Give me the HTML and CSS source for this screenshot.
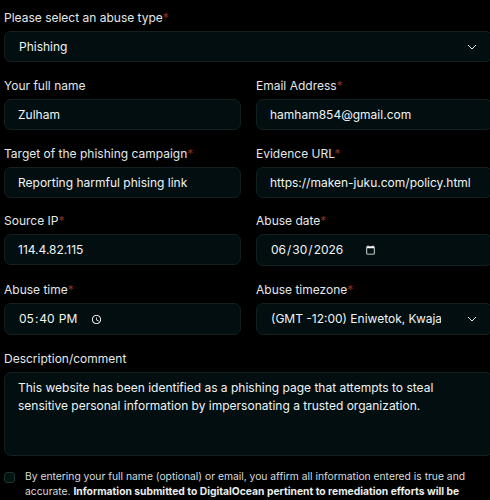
FILE: index.html
```html
<!DOCTYPE html>
<html lang="en">
<head>
<meta charset="utf-8">
<title>Report abuse</title>
<link rel="stylesheet" href="styles.css">
</head>
<body>
<form class="form">
  <div class="field full">
    <label class="label">Please select an abuse type<span class="req">*</span></label>
    <div class="select-wrap">
      <select class="control select"><option>Phishing</option></select>
      <svg class="chev" viewBox="0 0 12 12" width="12" height="12"><path d="M2 4l4 4 4-4" fill="none" stroke="#e8eeee" stroke-width="1"/></svg>
    </div>
  </div>
  <div class="field">
    <label class="label">Your full name</label>
    <input class="control" value="Zulham">
  </div>
  <div class="field">
    <label class="label">Email Address<span class="req">*</span></label>
    <input class="control" value="hamham854@gmail.com">
  </div>
  <div class="field">
    <label class="label">Target of the phishing campaign<span class="req">*</span></label>
    <input class="control" value="Reporting harmful phising link">
  </div>
  <div class="field">
    <label class="label">Evidence URL<span class="req">*</span></label>
    <input class="control" value="https://maken-juku.com/policy.html">
  </div>
  <div class="field">
    <label class="label">Source IP<span class="req">*</span></label>
    <input class="control" value="114.4.82.115">
  </div>
  <div class="field">
    <label class="label">Abuse date<span class="req">*</span></label>
    <input class="control tall" type="date" value="2026-06-30">
  </div>
  <div class="field">
    <label class="label">Abuse time<span class="req">*</span></label>
    <input class="control tall" type="time" value="17:40">
  </div>
  <div class="field">
    <label class="label">Abuse timezone<span class="req">*</span></label>
    <div class="select-wrap">
      <select class="control select tall"><option>(GMT -12:00) Eniwetok, Kwajalein</option></select>
      <svg class="chev" viewBox="0 0 12 12" width="12" height="12"><path d="M2 4l4 4 4-4" fill="none" stroke="#e8eeee" stroke-width="1"/></svg>
    </div>
  </div>
  <div class="field full">
    <label class="label">Description/comment</label>
    <textarea class="control area">This website has been identified as a phishing page that attempts to steal sensitive personal information by impersonating a trusted organization.</textarea>
  </div>
  <div class="consent full">
    <span class="check"></span>
    <p class="legal">By entering your full name (optional) or email, you affirm all information entered is true and accurate. <strong>Information submitted to DigitalOcean pertinent to remediation efforts will be</strong></p>
  </div>
</form>
</body>
</html>
```
FILE: styles.css
```css
html, body {
  margin: 0;
  height: 500px;
  overflow: hidden;
  background: #000;
}
body {
  font-family: Inter, "Liberation Sans", sans-serif;
  color: #e8eeee;
  color-scheme: dark;
}
.form {
  display: grid;
  grid-template-columns: 237px 237px;
  column-gap: 15px;
  row-gap: 15.8px;
  padding: 10px 0 0 4px;
  width: 493px;
  box-sizing: border-box;
}
.full { grid-column: 1 / -1; }
.field {
  display: flex;
  flex-direction: column;
  gap: 5px;
  min-width: 0;
}
.label {
  font-size: 12px;
  line-height: 16px;
  color: #e3e8e8;
}
.req { color: #8c2f1c; }
.control {
  box-sizing: border-box;
  width: 100%;
  height: 31px;
  padding: 0 13px;
  font: 12px/16px Inter, "Liberation Sans", sans-serif;
  color: #f0f4f4;
  background: #020e10;
  border: 1px solid #12211f;
  border-radius: 7px;
  outline: none;
  margin: 0;
}
.tall { height: 32px; }
input[type="date"], input[type="time"] { justify-content: flex-start; }
input[type="date"]::-webkit-datetime-edit,
input[type="time"]::-webkit-datetime-edit { flex: none; }
input[type="date"]::-webkit-calendar-picker-indicator {
  width: 11px;
  height: 11px;
  padding: 0;
  margin-left: 1px;
}
input[type="time"]::-webkit-calendar-picker-indicator {
  width: 11px;
  height: 11px;
  padding: 0;
  margin-left: 12px;
}
.select-wrap { position: relative; }
.select { appearance: none; padding-left: 14px; padding-right: 51px; display: block; }
.chev { position: absolute; right: 15px; top: 9.5px; }
.area {
  height: 84px;
  padding: 6px 13px;
  resize: none;
  display: block;
  line-height: 18px;
}
.consent {
  display: flex;
  gap: 10px;
  margin-top: -3px;
}
.check {
  box-sizing: border-box;
  flex: none;
  width: 11px;
  height: 11px;
  margin-top: 3px;
  border: 1px solid #1d3330;
  border-radius: 3px;
  background: #031312;
}
.legal {
  margin: 0;
  font-size: 10.3px;
  line-height: 15px;
  color: #d5dcdc;
  width: 450px;
}
.legal strong { font-weight: 700; color: #e8eeee; }
```
